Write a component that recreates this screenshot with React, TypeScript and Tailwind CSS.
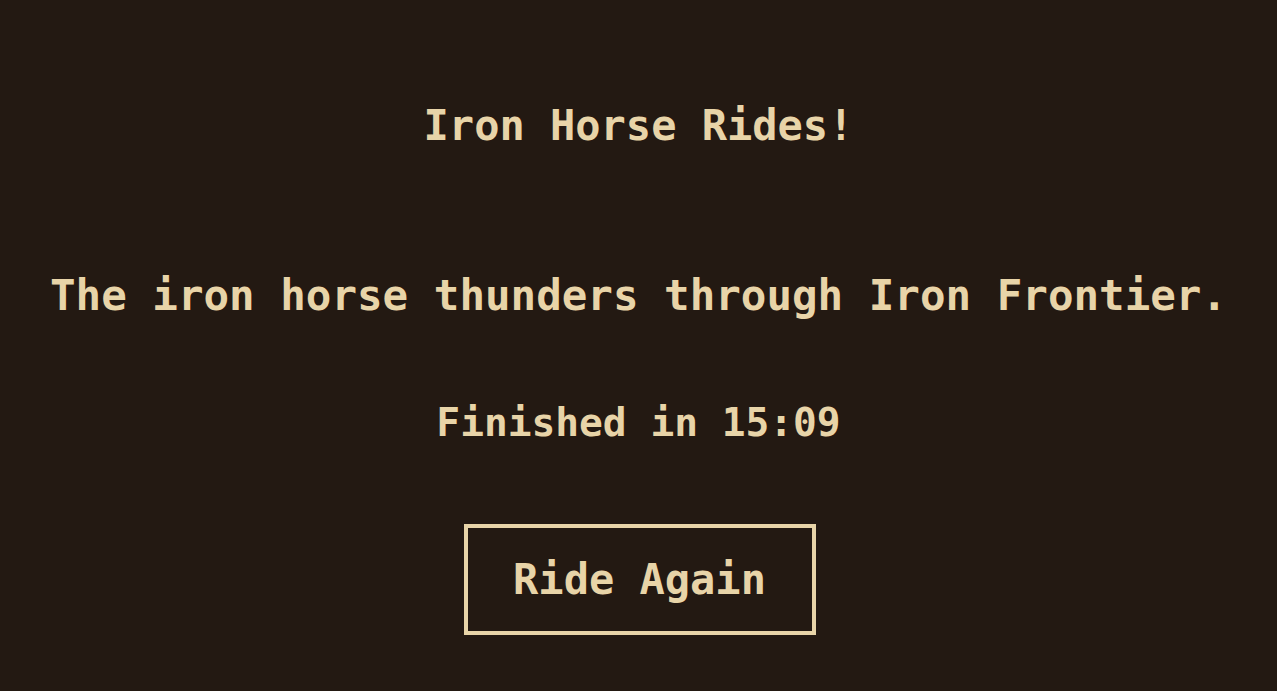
export default function App() {
  return (
    <div className="flex min-h-[691px] w-full flex-col items-center bg-[#231912] pt-[102px] font-['DejaVu_Sans_Mono',monospace] font-bold text-[#e8d4a8]">
      <h1 className="text-[42px] leading-[48px]">Iron Horse Rides!</h1>
      <p className="mt-[122px] text-[42.5px] leading-[48px]">The iron horse thunders through Iron Frontier.</p>
      <p className="mt-[78px] text-[39.5px] leading-[48px]">Finished in 15:09</p>
      <button className="mt-[78px] ml-[2px] flex h-[111px] w-[352px] items-center justify-center border-4 border-[#e8d4a8] text-[42px] leading-[48px]">
        Ride Again
      </button>
    </div>
  );
}
